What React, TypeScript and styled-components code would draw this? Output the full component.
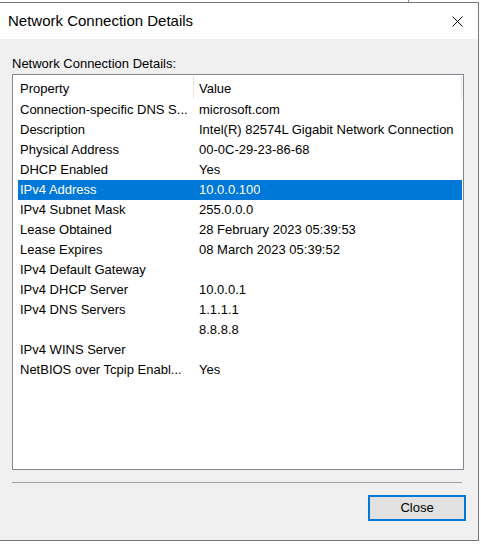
import React from "react";
import styled, { createGlobalStyle } from "styled-components";

const GlobalStyle = createGlobalStyle`
  html, body {
    margin: 0;
    padding: 0;
    background: #ffffff;
  }
  body {
    font-family: "Liberation Sans", Arial, sans-serif;
    font-size: 13px;
    color: #000000;
  }
`;

const BehindStrip = styled.div`
  height: 2px;
  display: flex;
`;

const BehindEdge = styled.div`
  width: 408px;
  border-right: 1px solid #8a8a8a;
`;

const Window = styled.div`
  box-sizing: border-box;
  width: 480px;
  height: 539px;
  margin-left: -1px;
  border: 1px solid #767676;
  display: flex;
  flex-direction: column;
  background: #f0f0f0;
`;

const TitleBar = styled.div`
  height: 36px;
  background: #ffffff;
  display: flex;
  align-items: center;
  justify-content: space-between;
  padding: 0 15px 0 8px;
`;

const Title = styled.span`
  font-size: 15px;
  line-height: 36px;
  color: #000000;
`;

const CloseGlyph = styled.svg`
  display: block;
  width: 11px;
  height: 11px;
`;

const Body = styled.div`
  flex: 1;
  display: flex;
  flex-direction: column;
  padding: 17px 13px 0 12px;
`;

const GroupLabel = styled.div`
  line-height: 16px;
  height: 16px;
  margin-bottom: 2px;
`;

const ListView = styled.div`
  box-sizing: border-box;
  width: 452px;
  height: 396px;
  border: 1px solid #828790;
  background: #ffffff;
  display: flex;
  flex-direction: column;
`;

const HeaderRow = styled.div`
  display: flex;
  height: 25px;
`;

const HeaderCell = styled.div<{ $w: number; $pad: number }>`
  box-sizing: border-box;
  width: ${(p) => p.$w}px;
  padding: 3px 0 0 ${(p) => p.$pad}px;
  line-height: 20px;
  border-right: 1px solid #e5e5e5;
  margin: 1px 0 1px 0;
`;

const Rows = styled.div`
  display: flex;
  flex-direction: column;
  padding-left: 5px;
`;

const Row = styled.div<{ $selected?: boolean }>`
  display: flex;
  width: 444px;
  height: 20px;
  line-height: 20px;
  white-space: nowrap;
  background: ${(p) => (p.$selected ? "#0078d7" : "transparent")};
  color: ${(p) => (p.$selected ? "#ffffff" : "#000000")};
`;

const PropCell = styled.div`
  box-sizing: border-box;
  width: 176px;
  padding-left: 2px;
  overflow: hidden;
`;

const ValueCell = styled.div`
  padding-left: 5px;
  overflow: hidden;
`;

const Divider = styled.div`
  width: 450px;
  height: 1px;
  background: #a0a0a0;
  margin-top: 12px;
`;

const Footer = styled.div`
  display: flex;
  justify-content: flex-end;
  margin-top: 12px;
`;

const Button = styled.button`
  box-sizing: border-box;
  width: 98px;
  height: 26px;
  border: 2px solid #0078d7;
  background: #e1e1e1;
  font-family: "Liberation Sans", Arial, sans-serif;
  font-size: 13px;
  line-height: 22px;
  color: #000000;
  padding: 0;
  margin-right: -1px;
`;

const details: [string, string][] = [
  ["Connection-specific DNS S...", "microsoft.com"],
  ["Description", "Intel(R) 82574L Gigabit Network Connection"],
  ["Physical Address", "00-0C-29-23-86-68"],
  ["DHCP Enabled", "Yes"],
  ["IPv4 Address", "10.0.0.100"],
  ["IPv4 Subnet Mask", "255.0.0.0"],
  ["Lease Obtained", "28 February 2023 05:39:53"],
  ["Lease Expires", "08 March 2023 05:39:52"],
  ["IPv4 Default Gateway", ""],
  ["IPv4 DHCP Server", "10.0.0.1"],
  ["IPv4 DNS Servers", "1.1.1.1"],
  ["", "8.8.8.8"],
  ["IPv4 WINS Server", ""],
  ["NetBIOS over Tcpip Enabl...", "Yes"],
];

export default function App() {
  return (
    <>
      <GlobalStyle />
      <BehindStrip>
        <BehindEdge />
      </BehindStrip>
      <Window>
        <TitleBar>
          <Title>Network Connection Details</Title>
          <CloseGlyph viewBox="0 0 11 11">
            <path d="M0.5 0.5 L10.5 10.5 M10.5 0.5 L0.5 10.5" stroke="#000" strokeWidth="1" fill="none" />
          </CloseGlyph>
        </TitleBar>
        <Body>
          <GroupLabel>Network Connection Details:</GroupLabel>
          <ListView>
            <HeaderRow>
              <HeaderCell $w={181} $pad={7}>Property</HeaderCell>
              <HeaderCell $w={268} $pad={5}>Value</HeaderCell>
            </HeaderRow>
            <Rows>
              {details.map(([prop, value], i) => (
                <Row key={i} $selected={prop === "IPv4 Address"}>
                  <PropCell>{prop}</PropCell>
                  <ValueCell>{value}</ValueCell>
                </Row>
              ))}
            </Rows>
          </ListView>
          <Divider />
          <Footer>
            <Button>Close</Button>
          </Footer>
        </Body>
      </Window>
    </>
  );
}
